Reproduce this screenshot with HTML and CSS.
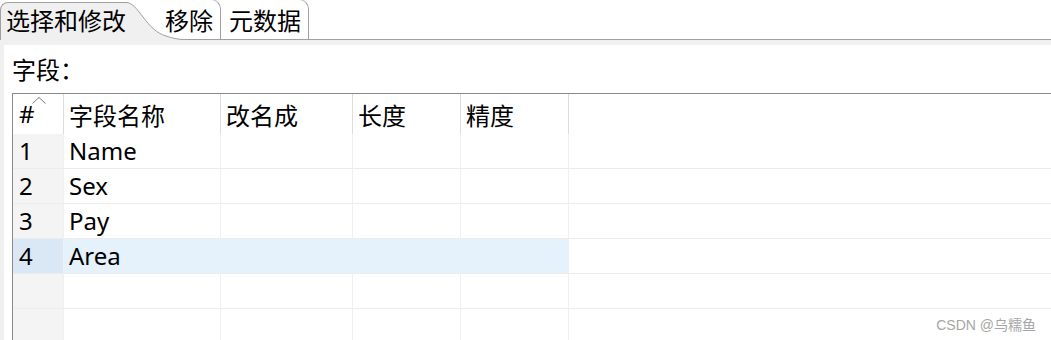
FILE: index.html
```html
<!DOCTYPE html>
<html lang="zh-CN">
<head>
    <meta charset="UTF-8">
    <title>选择和修改</title>
    <link rel="stylesheet" href="styles.css">
</head>
<body>
    <div class="tabbar">
        <div class="tab-active">
            <span class="tab-label">选择和修改</span>
            <svg class="tab-wing" width="58" height="38" viewBox="0 0 58 38">
                <path class="wing-fill" d="M0,0.5 C6,0.5 10,6 17,15 C24,24 30,31 40,34 C46,36 52,37.5 58,37.5 L58,38 L0,38 Z"/>
                <path class="wing-edge" d="M0,0.5 C6,0.5 10,6 17,15 C24,24 30,31 40,34 C46,36 52,37.5 58,37.5"/>
            </svg>
        </div>
        <div class="tab tab-remove">移除</div>
        <div class="tab tab-meta">元数据</div>
        <div class="tab-rest"></div>
    </div>

    <div class="workspace">
        <div class="panel">
            <div class="field-label">字段：</div>
            <div class="grid">
                <div class="row head">
                    <div class="cell num">#
                        <svg class="sort-mark" width="14" height="7" viewBox="0 0 14 7">
                            <polyline points="0.5,6.5 7,0.5 13.5,6.5"/>
                        </svg>
                    </div>
                    <div class="cell">字段名称</div>
                    <div class="cell">改名成</div>
                    <div class="cell">长度</div>
                    <div class="cell">精度</div>
                    <div class="cell last"></div>
                </div>
                <div class="row">
                    <div class="cell num">1</div>
                    <div class="cell">Name</div>
                    <div class="cell"></div>
                    <div class="cell"></div>
                    <div class="cell"></div>
                    <div class="cell last"></div>
                </div>
                <div class="row">
                    <div class="cell num">2</div>
                    <div class="cell">Sex</div>
                    <div class="cell"></div>
                    <div class="cell"></div>
                    <div class="cell"></div>
                    <div class="cell last"></div>
                </div>
                <div class="row">
                    <div class="cell num">3</div>
                    <div class="cell">Pay</div>
                    <div class="cell"></div>
                    <div class="cell"></div>
                    <div class="cell"></div>
                    <div class="cell last"></div>
                </div>
                <div class="row selected">
                    <div class="cell num">4</div>
                    <div class="cell">Area</div>
                    <div class="cell"></div>
                    <div class="cell"></div>
                    <div class="cell"></div>
                    <div class="cell last"></div>
                </div>
                <div class="row">
                    <div class="cell num"></div>
                    <div class="cell"></div>
                    <div class="cell"></div>
                    <div class="cell"></div>
                    <div class="cell"></div>
                    <div class="cell last"></div>
                </div>
                <div class="row">
                    <div class="cell num"></div>
                    <div class="cell"></div>
                    <div class="cell"></div>
                    <div class="cell"></div>
                    <div class="cell"></div>
                    <div class="cell last"></div>
                </div>
            </div>
        </div>
    </div>

    <div class="watermark">CSDN @乌糯鱼</div>
</body>
</html>
```

FILE: styles.css
```css
* {
    box-sizing: border-box;
}

html, body {
    margin: 0;
    padding: 0;
    height: 100%;
}

body {
    position: relative;
    overflow: hidden;
    background-color: #ffffff;
    color: #000000;
    font-family: "Noto Sans", "Noto Sans CJK SC", sans-serif;
    font-size: 24px;
}

/* tabs */

.tabbar {
    display: flex;
    align-items: flex-start;
    height: 40px;
}

.tab-active {
    display: flex;
    position: relative;
    z-index: 1;
    margin-top: 2px;
    height: 38px;
}

.tab-label {
    display: block;
    height: 38px;
    padding-left: 5px;
    line-height: 36px;
    background-color: #f0f0f0;
    border-top: 1px solid #a0a0a0;
    border-left: 1px solid #a0a0a0;
    border-top-left-radius: 8px;
    white-space: nowrap;
}

.tab-wing {
    display: block;
}

.wing-fill {
    fill: #f0f0f0;
}

.wing-edge {
    fill: none;
    stroke: #a0a0a0;
    stroke-width: 1;
}

.tab {
    margin-top: -1px;
    height: 41px;
    padding-top: 3px;
    line-height: 36px;
    background-color: #ffffff;
    border-top: 1px solid #c8c8c8;
    border-right: 1px solid #a0a0a0;
    border-bottom: 1px solid #a0a0a0;
    border-top-right-radius: 10px;
    white-space: nowrap;
}

.tab-remove {
    margin-left: -29px;
    padding-left: 10px;
    padding-right: 7px;
}

.tab-meta {
    padding-left: 8px;
    padding-right: 7px;
}

.tab-rest {
    flex: 1;
    height: 40px;
    border-bottom: 1px solid #a0a0a0;
}

/* content */

.workspace {
    background-color: #f0f0f0;
    padding: 5px 0 0 4px;
}

.panel {
    height: 300px;
    padding-left: 8px;
    background-color: #ffffff;
}

.field-label {
    height: 45px;
    padding-top: 5px;
    margin-bottom: 3px;
    line-height: 40px;
}

.grid {
    border-top: 1px solid #8a8a8a;
    border-left: 1px solid #8a8a8a;
}

.row {
    display: grid;
    grid-template-columns: 51px 157px 132px 108px 108px 1fr;
    height: 35px;
    border-bottom: 1px solid #ececec;
}

.cell {
    padding-left: 5px;
    line-height: 34px;
    border-right: 1px solid #edf0f4;
    white-space: nowrap;
}

.cell.num {
    padding-left: 6px;
    background-color: #f4f4f4;
}

.cell.last {
    border-right: none;
}

.row.head {
    height: 40px;
    border-bottom: none;
}

.row.head .cell {
    padding-top: 4px;
    line-height: 36px;
    border-right-color: #dcdcdc;
    background-color: #ffffff;
}

.row.head .cell.num {
    position: relative;
    padding-top: 2px;
}

.row.head .cell.last {
    border-right: none;
}

.sort-mark {
    position: absolute;
    left: 19px;
    top: 3px;
}

.sort-mark polyline {
    fill: none;
    stroke: #7a7a7a;
    stroke-width: 1;
}

.row.selected .cell {
    background-color: #e5f1fb;
}

.row.selected .cell.num {
    background-color: #dae7f4;
}

.row.selected .cell.last {
    background-color: #ffffff;
}

.watermark {
    position: absolute;
    right: 15px;
    bottom: 7px;
    font-family: "Liberation Sans", "Noto Sans CJK SC", sans-serif;
    font-size: 14px;
    line-height: 16px;
    color: #a6a6a6;
}
```
